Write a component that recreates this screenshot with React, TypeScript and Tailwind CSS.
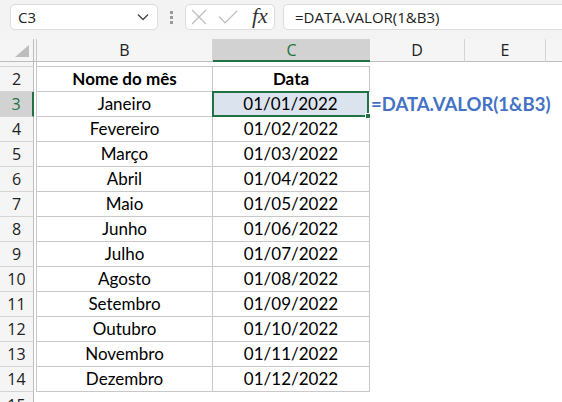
import React from 'react';

const months = [
    'Janeiro', 'Fevereiro', 'Março', 'Abril', 'Maio', 'Junho',
    'Julho', 'Agosto', 'Setembro', 'Outubro', 'Novembro', 'Dezembro',
];

const cellFont = { fontFamily: 'Lato, "Liberation Sans", sans-serif' };
const uiFont = { fontFamily: '"Open Sans", "Noto Sans", sans-serif' };

function RowHeader({ n, selected }: { n: number | string; selected?: boolean }) {
    return (
        <div
            className={
                selected
                    ? 'w-[34px] shrink-0 h-full flex items-center justify-center bg-[#d2d2d2] text-[#217346] border-r-2 border-[#217346] border-b border-b-[#d4d4d4] text-[16px]'
                    : 'w-[34px] shrink-0 h-full flex items-center justify-center bg-[#f5f5f5] text-[#222] border-r border-[#bdbdbd] border-b border-b-[#d4d4d4] text-[16px]'
            }
            style={uiFont}
        >
            {n}
        </div>
    );
}

export default function App() {
    return (
        <div className="w-[562px] h-[402px] overflow-hidden bg-white relative select-none">
            {/* Formula bar */}
            <div className="h-[39px] bg-[#f3f3f3] flex items-start pt-[4px] pl-[10px]">
                <div className="w-[148px] h-[26px] bg-white border border-[#dcdcdc] rounded-[5px] flex items-center justify-between pl-[7px] pr-[8px]" style={uiFont}>
                    <span className="text-[15px] text-[#222]">C3</span>
                    <svg width="12" height="8" viewBox="0 0 12 8" fill="none" stroke="#444" strokeWidth="1.3">
                        <path d="M1 1.5l5 5 5-5" />
                    </svg>
                </div>
                <div className="w-[27px] h-[26px] flex flex-col items-center justify-center gap-[2px]">
                    <div className="w-[3px] h-[3px] bg-[#9a9a9a]" />
                    <div className="w-[3px] h-[3px] bg-[#9a9a9a]" />
                    <div className="w-[3px] h-[3px] bg-[#9a9a9a]" />
                </div>
                <div className="w-[90px] h-[26px] bg-white border border-[#dcdcdc] rounded-[5px] flex items-center pl-[5px] gap-[11px]">
                    <svg width="16" height="16" viewBox="0 0 16 16" stroke="#bcbcbc" strokeWidth="1.2" fill="none">
                        <path d="M1 1l14 14M15 1L1 15" />
                    </svg>
                    <svg width="20" height="14" viewBox="0 0 20 14" stroke="#bcbcbc" strokeWidth="1.2" fill="none">
                        <path d="M1 6.5l6 6.5L19 1" />
                    </svg>
                    <span className="italic text-[22px] text-[#333] leading-none ml-[3px] -mt-[3px]" style={{ fontFamily: '"Liberation Serif", "DejaVu Serif", serif' }}>
                        fx
                    </span>
                </div>
                <div className="flex-1 h-[26px] ml-[8px] bg-white border border-[#dcdcdc] border-r-0 rounded-l-[5px] flex items-center pl-[11px] text-[15px] text-[#222]" style={uiFont}>
                    =DATA.VALOR(1&amp;B3)
                </div>
            </div>

            {/* Column header row */}
            <div className="h-[23px] flex bg-[#f5f5f5] text-[16px] text-[#222]" style={uiFont}>
                <div className="w-[34px] shrink-0 h-full border-r border-[#bdbdbd] border-b border-b-[#bdbdbd] flex items-end justify-end pr-[4px] pb-[4px]">
                    <svg width="14" height="12" viewBox="0 0 14 12">
                        <path d="M14 0v12H0z" fill="#bdbdbd" />
                    </svg>
                </div>
                <div className="w-[3px] shrink-0 h-full border-r border-[#c8c8c8] border-b border-b-[#bdbdbd]" />
                <div className="w-[176px] shrink-0 h-full flex items-center justify-center border-r border-[#d4d4d4] border-b border-b-[#bdbdbd]">B</div>
                <div className="w-[157px] shrink-0 h-full flex items-center justify-center bg-[#d2d2d2] text-[#217346] border-b-2 border-[#217346]">C</div>
                <div className="w-[95px] shrink-0 h-full flex items-center justify-center border-r border-[#d4d4d4] border-b border-b-[#bdbdbd]">D</div>
                <div className="w-[81px] shrink-0 h-full flex items-center justify-center border-r border-[#d4d4d4] border-b border-b-[#bdbdbd]">E</div>
                <div className="flex-1 h-full border-b border-[#bdbdbd]" />
            </div>

            {/* Row 1 (narrow) */}
            <div className="h-[5px] flex">
                <div className="w-[34px] shrink-0 h-full bg-[#f5f5f5] border-r border-[#bdbdbd] border-b border-b-[#d4d4d4]" />
                <div className="w-[3px] shrink-0 border-r border-[#c8c8c8]" />
                <div className="flex-1 border-b border-[#c8c8c8] w-[333px] max-w-[333px]" />
            </div>

            {/* Row 2: table header */}
            <div className="h-[25px] flex">
                <RowHeader n={2} />
                <div className="w-[3px] shrink-0 border-r border-[#c8c8c8]" />
                <div className="w-[176px] shrink-0 flex items-center justify-center border-r border-b border-[#c8c8c8] font-bold text-[17px] text-black" style={cellFont}>
                    Nome do mês
                </div>
                <div className="w-[157px] shrink-0 flex items-center justify-center border-r border-b border-[#c8c8c8] font-bold text-[17px] text-black" style={cellFont}>
                    Data
                </div>
            </div>

            {/* Rows 3-14 */}
            {months.map((m, i) => {
                const row = i + 3;
                const sel = row === 3;
                const mm = String(i + 1).padStart(2, '0');
                return (
                    <div key={m} className="h-[25px] flex">
                        <RowHeader n={row} selected={sel} />
                        <div className="w-[3px] shrink-0 border-r border-[#c8c8c8]" />
                        <div className="w-[176px] shrink-0 flex items-center justify-center border-r border-b border-[#c8c8c8] text-[17px] text-black" style={cellFont}>
                            {m}
                        </div>
                        <div
                            className={
                                sel
                                    ? 'w-[157px] shrink-0 flex items-center justify-center bg-[#dbe3ef] text-[17px] text-black relative -ml-px -mt-px h-[26px] border-2 border-[#217346]'
                                    : 'w-[157px] shrink-0 flex items-center justify-center border-r border-b border-[#c8c8c8] text-[17px] text-black'
                            }
                            style={cellFont}
                        >
                            01/{mm}/2022
                            {sel && <div className="absolute -right-[4px] -bottom-[4px] w-[6px] h-[6px] bg-[#217346] border border-white" />}
                        </div>
                        {sel && (
                            <div className="pl-[2px] flex items-center whitespace-nowrap font-bold text-[18.5px] text-[#4472c4]" style={cellFont}>
                                =DATA.VALOR(1&amp;B3)
                            </div>
                        )}
                    </div>
                );
            })}

            {/* Row 15 (cut) */}
            <div className="h-[10px] flex overflow-hidden">
                <div className="w-[34px] shrink-0 h-[25px] bg-[#f5f5f5] border-r border-[#bdbdbd] flex items-center justify-center text-[16px] text-[#222]" style={uiFont}>
                    15
                </div>
            </div>
        </div>
    );
}
